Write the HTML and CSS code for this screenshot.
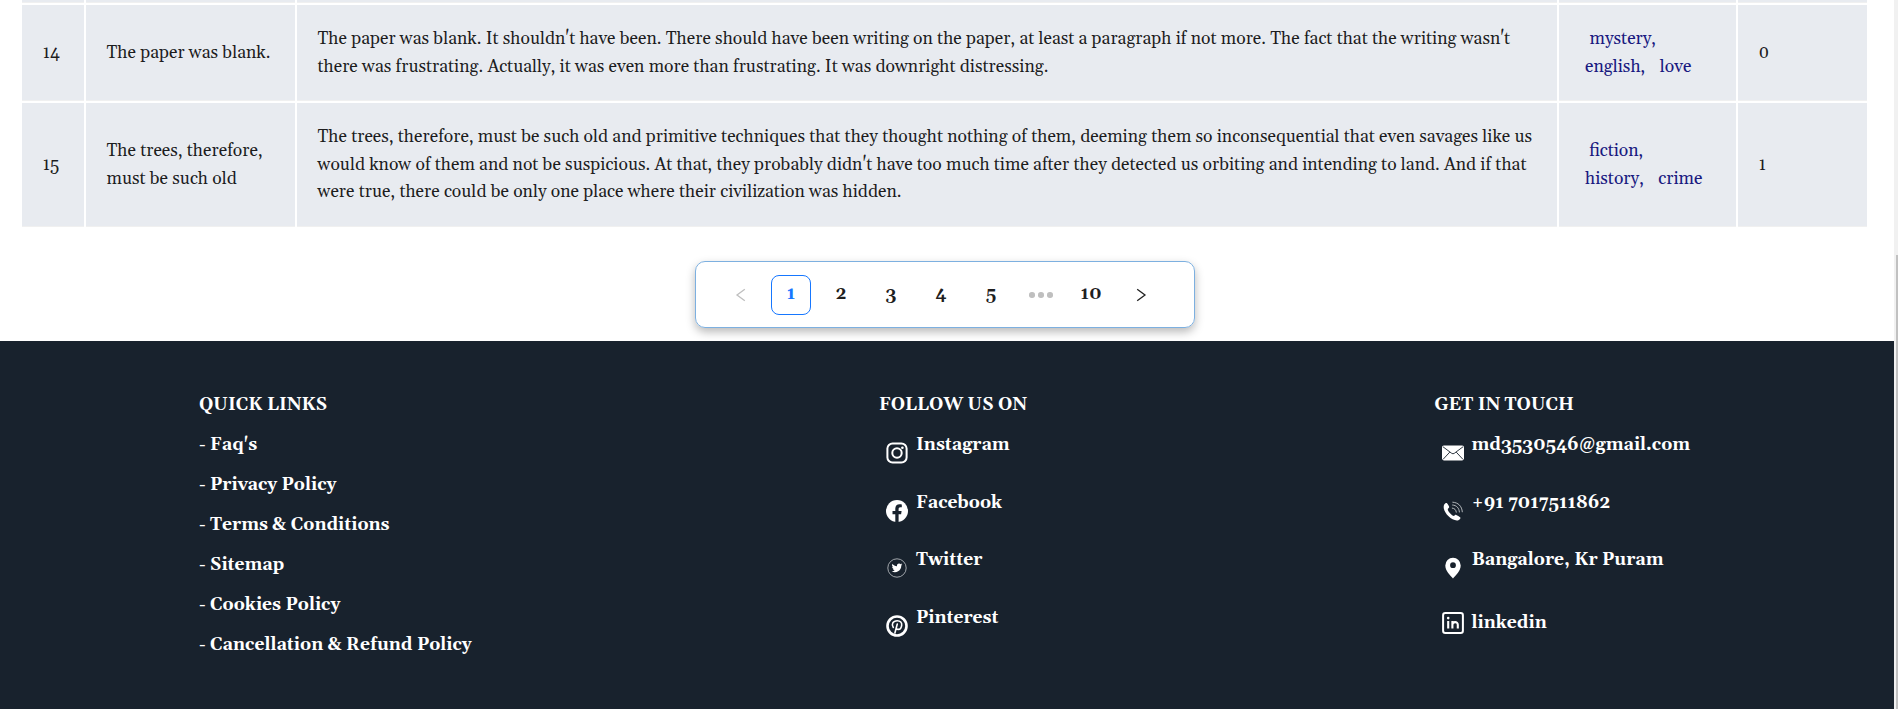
FILE: index.html
```html
<!DOCTYPE html>
<html lang="en">
<head>
<meta charset="utf-8">
<title>Posts</title>
<link rel="stylesheet" href="styles.css">
</head>
<body>
<div class="page">
  <main class="main">
    <div class="table">
      <div class="row row-cut"><div class="cell"></div><div class="cell"></div><div class="cell"></div><div class="cell"></div><div class="cell"></div></div>
      <div class="row row-14">
        <div class="cell">14</div>
        <div class="cell">The paper was blank.</div>
        <div class="cell">The paper was blank. It shouldn't have been. There should have been writing on the paper, at least a paragraph if not more. The fact that the writing wasn't<br>there was frustrating. Actually, it was even more than frustrating. It was downright distressing.</div>
        <div class="cell tags"><span class="tag-first">mystery,</span><br><span class="tag">english,</span><span>love</span></div>
        <div class="cell">0</div>
      </div>
      <div class="row row-15">
        <div class="cell">15</div>
        <div class="cell">The trees, therefore,<br>must be such old</div>
        <div class="cell">The trees, therefore, must be such old and primitive techniques that they thought nothing of them, deeming them so inconsequential that even savages like us<br>would know of them and not be suspicious. At that, they probably didn't have too much time after they detected us orbiting and intending to land. And if that<br>were true, there could be only one place where their civilization was hidden.</div>
        <div class="cell tags"><span class="tag-first">fiction,</span><br><span class="tag">history,</span><span>crime</span></div>
        <div class="cell">1</div>
      </div>
    </div>
    <nav class="pagination">
      <span class="pg"><svg class="arrow off" viewBox="0 0 14 14"><path d="M10.8 1.2 3 7l7.8 5.8"/></svg></span>
      <span class="pg active">1</span>
      <span class="pg">2</span>
      <span class="pg">3</span>
      <span class="pg">4</span>
      <span class="pg">5</span>
      <span class="pg dots"><i></i><i></i><i></i></span>
      <span class="pg">10</span>
      <span class="pg"><svg class="arrow" viewBox="0 0 14 14"><path d="M3.2 1.2 11 7l-7.8 5.8"/></svg></span>
    </nav>
  </main>
  <footer class="footer">
    <section class="col links">
      <h4>QUICK LINKS</h4>
      <p>- Faq's</p>
      <p>- Privacy Policy</p>
      <p>- Terms &amp; Conditions</p>
      <p>- Sitemap</p>
      <p>- Cookies Policy</p>
      <p>- Cancellation &amp; Refund Policy</p>
    </section>
    <section class="col social">
      <h4>FOLLOW US ON</h4>
      <div class="item"><svg viewBox="0 0 24 24"><g fill="none" stroke="#fff" stroke-width="2"><rect x="2.4" y="2.4" width="19.2" height="19.2" rx="5.2"/><circle cx="12" cy="12" r="4.7"/></g><circle cx="17.4" cy="6.7" r="1.3" fill="#fff"/></svg><span>Instagram</span></div>
      <div class="item"><svg viewBox="0 0 24 24"><circle cx="12" cy="12" r="11" fill="#fff"/><path fill="#18222d" d="M10.3 23v-7.8H7.5V12h2.8V9.6c0-2.8 1.7-4.3 4.2-4.3.9 0 1.7.1 2.3.2v2.7h-1.4c-1.4 0-1.8.9-1.8 1.8v2h3l-.5 3.2h-2.5V23z"/></svg><span>Facebook</span></div>
      <div class="item"><svg viewBox="0 0 24 24"><circle cx="12" cy="12" r="9.2" fill="none" stroke="#c3c7ca" stroke-width=".8"/><path fill="#fff" transform="translate(6.6 6.4) scale(.45)" d="M24 4.6c-.9.4-1.8.7-2.8.8 1-.6 1.8-1.6 2.2-2.7-1 .6-2 1-3.1 1.2a4.92 4.92 0 0 0-8.4 4.5C7.7 8.2 4.1 6.3 1.7 3.2a4.93 4.93 0 0 0 1.5 6.6c-.8 0-1.6-.2-2.2-.6v.1c0 2.4 1.7 4.4 3.9 4.8-.7.2-1.5.2-2.2.1.6 2 2.4 3.4 4.6 3.4A9.9 9.9 0 0 1 0 19.500 14 14 0 0 0 21.500 7.100C22.500 6.400 23.300 5.500 24 4.600z"/></svg><span>Twitter</span></div>
      <div class="item"><svg viewBox="0 0 24 24"><circle cx="12" cy="12" r="9.5" fill="none" stroke="#fff" stroke-width="2.6"/><path fill="none" stroke="#fff" stroke-width="1.6" stroke-linecap="round" d="M8.300 13.400C6.100 10.500 7.900 6.700 12.200 6.700c3.200 0 4.800 2 4.500 4.400-.3 2.800-1.900 4.400-3.600 4.300-1.300 0-2-.8-1.900-1.600M12.300 10 9.900 19"/></svg><span>Pinterest</span></div>
    </section>
    <section class="col contact">
      <h4>GET IN TOUCH</h4>
      <div class="item"><svg viewBox="0 0 24 24"><rect x="1" y="4.600" width="22" height="14.800" rx="1.800" fill="#fff"/><path fill="none" stroke="#18222d" stroke-width=".9" d="m2 5.800 8.700 6.500q1.300 1 2.600 0L22 5.800M2 18.400l6.800-7.300M22 18.400l-6.800-7.300"/></svg><span>md3530546@gmail.com</span></div>
      <div class="item"><svg viewBox="0 0 24 24"><path fill="#fff" d="M3.200 5.500c.9-1.300 2.200-2 3-1 .8.900 1.700 2.400 2 3.400.2.900-.9 1.500-1.400 2.100-.2 2.200 4 6.600 6.200 6.900.7-.4 1.400-1.300 2.200-1 1.300.5 3 1.500 3.900 2.300.9.900-.4 2.300-1.700 3C10.700 23 .2 11.800 3.200 5.500z"/><path fill="none" stroke="#c3c7ca" stroke-width=".9" stroke-linecap="round" d="M11.300 9.100c2.300.2 3.800 1.800 4 4.100M11.600 6c4 .3 6.500 3 6.800 7M11.800 3.200c5.500.3 9.100 4 9.500 9.600"/></svg><span>+91 7017511862</span></div>
      <div class="item"><svg viewBox="0 0 24 24"><path fill="#fff" fill-rule="evenodd" d="M12 1.700a7.700 7.700 0 0 0-7.700 7.700C4.300 15 9.500 19.200 12 22.500c2.500-3.300 7.700-7.500 7.700-13.100A7.700 7.700 0 0 0 12 1.700zm0 4.600a2.900 2.900 0 1 1 0 5.800 2.900 2.900 0 0 1 0-5.800z"/></svg><span>Bangalore, Kr Puram</span></div>
      <div class="item centered"><svg viewBox="0 0 24 24"><rect x="2.100" y="2.100" width="19.800" height="19.800" rx="2.200" fill="none" stroke="#fff" stroke-width="2"/><path fill="none" stroke="#fff" stroke-width="2.100" d="M7.200 10v7.400M11.400 17.400V10M11.400 17.400v-3.600c0-3.500 5.400-3.700 5.400 0v3.600"/><circle cx="7.200" cy="7.100" r="1.300" fill="#fff"/></svg><span>linkedin</span></div>
    </section>
  </footer>
</div>
<div class="scrollbar"><div class="thumb"></div></div>
</body>
</html>
```
FILE: styles.css
```css
* { box-sizing: border-box; }
body {
  margin: 0;
  height: 709px;
  overflow: hidden;
  display: flex;
  background: #fff;
  color: rgba(0, 0, 0, .88);
  font-family: Gelasio, Georgia, "Liberation Serif", serif;
  font-size: 17.5px;
  line-height: 27.5px;
  font-variant-numeric: oldstyle-nums;
  white-space: nowrap;
}
.page { width: 1894px; display: flex; flex-direction: column; }
.main { height: 341px; padding-left: 22px; }
.table { display: flex; flex-direction: column; gap: 2px; }
.row { display: grid; grid-template-columns: 62px 209px 1260px 177px 129px; gap: 2px; }
.row-cut { height: 3px; }
.row-14 { height: 96px; }
.row-15 { height: 124px; }
.cell {
  background: #e8ebf0;
  border-bottom: 1px solid #f0f0f0;
  padding: 2px 20px 0 20.5px;
  display: grid;
  align-content: center;
}
.row-cut .cell { padding: 0; }
.tags { display: block; padding: 2px 0 0 26px; color: #191980; }
.tag-first { margin-left: 4.5px; }
.tag { margin-right: 14.5px; }

.pagination {
  width: 500px;
  height: 67px;
  margin: 34px 0 0 673px;
  padding: 0 30px 0 22px;
  display: flex;
  justify-content: center;
  align-items: center;
  gap: 10px;
  border: 1px solid #7db0e0;
  border-radius: 10px;
  box-shadow: 0 4px 10px rgba(0, 0, 0, .28);
  font-weight: 700;
}
.pg {
  flex: none;
  width: 40px;
  height: 40px;
  padding-top: 1px;
  display: flex;
  align-items: center;
  justify-content: center;
}
.active { border: 1px solid #1677ff; border-radius: 8px; color: #1677ff; }
.arrow { width: 14px; height: 14px; fill: none; stroke: #222; stroke-width: 1.3; }
.arrow.off { stroke: #bfbfbf; }
.dots { gap: 3.5px; }
.dots i { width: 5.5px; height: 5.5px; border-radius: 50%; background: #bfbfbf; }

.footer {
  flex: 1;
  display: grid;
  grid-template-columns: 680px 555.5px 1fr;
  padding: 51px 0 0 199px;
  background: #18222d;
  color: #fff;
  font-weight: 700;
}
.col h4, .col p { margin: 0 0 12.5px; font-size: inherit; }
.item { height: 57.5px; display: flex; align-items: flex-start; gap: 7px; padding-left: 6px; }
.item svg { width: 24px; height: 24px; margin-top: 9px; }
.item.centered { padding-top: 5px; }
.item.centered svg { margin-top: 1px; }

.scrollbar { width: 4px; background: #f1f1f1; padding: 255px 0 0 2px; }
.thumb { height: 454px; background: #c1c1c1; }
```
